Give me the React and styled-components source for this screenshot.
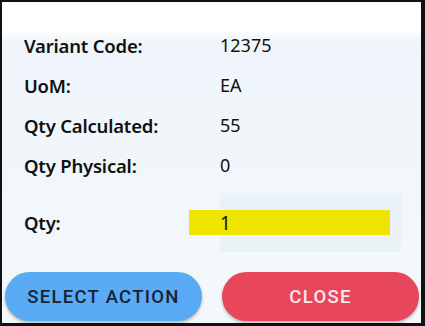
import React from 'react'
import { styled, createGlobalStyle } from 'styled-components'

const Global = createGlobalStyle`
  html, body { margin: 0; padding: 0; background: #fff; }
  * { box-sizing: border-box; }
`

const Frame = styled.div`
  width: 425px;
  height: 326px;
  border-style: solid;
  border-color: #111;
  border-width: 2px 4px 3px 2px;
  background: linear-gradient(to bottom, #ffffff 0px, #ffffff 28px, #eff5fa 40px, #f3f8fb 100%);
  display: flex;
  flex-direction: column;
  padding-top: 23px;
`

const Row = styled.div`
  display: grid;
  grid-template-columns: 196px 1fr;
  align-items: center;
  height: ${p => p.$h || 40}px;
  margin-top: ${p => p.$mt || 0}px;
  padding-left: 22px;
`

const Label = styled.div`
  font-family: "Noto Sans", sans-serif;
  font-weight: 600;
  font-size: 18.5px;
  letter-spacing: -0.2px;
  color: #111;
`

const Value = styled.div`
  font-family: "Noto Sans", sans-serif;
  font-size: 18px;
  color: #111;
`

const InputBox = styled.div`
  width: 181px;
  height: 59px;
  background: #eaf2f8;
  display: flex;
  align-items: center;
`

const Highlight = styled.div`
  margin-left: -31px;
  width: 201px;
  height: 25px;
  background: #f0e500;
  padding-left: 31px;
  display: flex;
  align-items: center;
  font-family: "Noto Sans", sans-serif;
  font-size: 19px;
  color: #111;
`

const Buttons = styled.div`
  display: flex;
  gap: 20px;
  padding-left: 3px;
  margin-top: 20px;
`

const Button = styled.button`
  width: 197px;
  height: 49px;
  border: none;
  border-radius: 25px;
  background: ${p => p.$bg};
  color: ${p => p.$fg};
  font-family: Roboto, sans-serif;
  font-weight: 500;
  font-size: 18.5px;
  letter-spacing: 1.3px;
  box-shadow: 0 2px 3px rgba(0, 0, 0, 0.25);
  padding: 0;
`

const rows = [
  ['Variant Code:', '12375'],
  ['UoM:', 'EA'],
  ['Qty Calculated:', '55'],
  ['Qty Physical:', '0'],
]

export default function App() {
  return (
    <>
      <Global />
      <Frame>
        {rows.map(([l, v]) => (
          <Row key={l}>
            <Label>{l}</Label>
            <Value>{v}</Value>
          </Row>
        ))}
        <Row $h={59} $mt={8}>
          <Label>Qty:</Label>
          <InputBox>
            <Highlight>1</Highlight>
          </InputBox>
        </Row>
        <Buttons>
          <Button $bg="#5aabf6" $fg="#1a2233">SELECT ACTION</Button>
          <Button $bg="#e8465b" $fg="#f7e9ec">CLOSE</Button>
        </Buttons>
      </Frame>
    </>
  )
}
